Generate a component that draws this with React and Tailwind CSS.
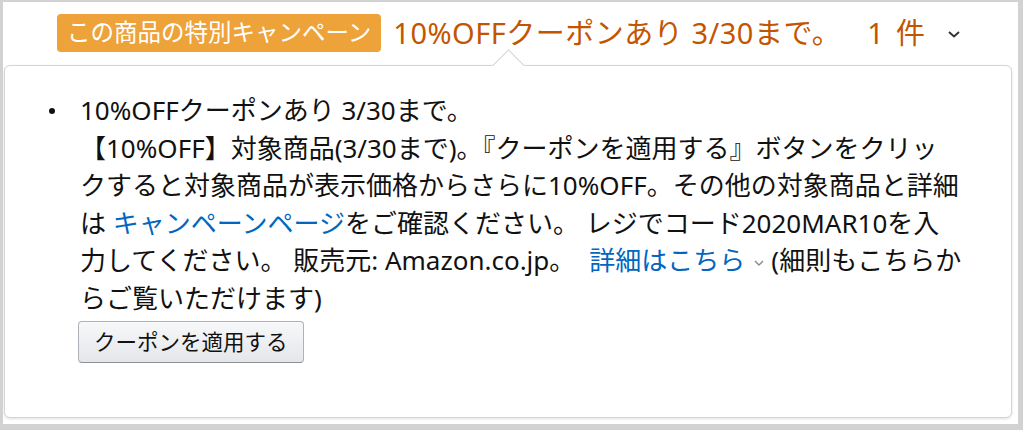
export default function App() {
  return (
    <div
      className="flex h-[430px] w-[1023px] flex-col overflow-hidden border-b-[6px] border-l-[3px] border-r-[5px] border-t-2 border-[#d2d2d2] bg-white"
      style={{ fontFamily: '"Noto Sans", "Noto Sans CJK JP", sans-serif' }}
    >
      <Header />
      <CouponPopover />
    </div>
  );
}

function Header() {
  return (
    <div className="flex h-[63px] shrink-0 items-center pb-[2px] pl-[54px]">
      <span className="flex h-[38px] items-center rounded-[4px] bg-[#eea23a] px-[10px] text-[23.5px] leading-none text-white">
        この商品の特別キャンペーン
      </span>
      <span className="ml-[12px] text-[29px] leading-none tracking-[0.5px] text-[#c45500]">
        10%OFFクーポンあり 3/30まで。
      </span>
      <span className="ml-[26px] flex items-center gap-[12px] text-[29px] leading-none text-[#c45500]">
        <span>1</span>
        <span>件</span>
      </span>
      <svg
        className="ml-[22px] mt-[2px]"
        width="14"
        height="10"
        viewBox="0 0 14 10"
        fill="none"
        stroke="#333"
        strokeWidth="2"
      >
        <path d="M2 3l5 4.5L12 3" />
      </svg>
    </div>
  );
}

function CouponPopover() {
  return (
    <div className="relative mb-[6px] ml-[1px] mr-[6px] flex-1 rounded-[6px] border border-[#d5d5d5] bg-white shadow-[0_1px_3px_rgba(0,0,0,0.13)]">
      {/* arrow */}
      <div className="absolute left-[492px] top-[-12px] h-[23px] w-[23px] rotate-45 border-l border-t border-[#d5d5d5] bg-white" />

      <div className="flex pl-[44px] pr-[30px] pt-[26px] text-[26px] leading-[37.5px] text-[#111]">
        <span className="flex h-[37.5px] w-[31px] shrink-0 items-center">
          <span className="h-[6px] w-[6px] rounded-full bg-[#111]" />
        </span>
        <div className="w-[900px]">
          <p className="whitespace-nowrap">
            10%OFFクーポンあり 3/30まで。
            <br />
            【10%OFF】対象商品(3/30まで)。『クーポンを適用する』ボタンをクリッ
            <br />
            クすると対象商品が表示価格からさらに10%OFF。その他の対象商品と詳細
            <br />
            は <span className="text-[#0066c0]">キャンペーンページ</span>をご確認ください。 レジでコード2020MAR10を入
            <br />
            力してください。 販売元: Amazon.co.jp。
            <span className="ml-[14px] text-[#0066c0]">詳細はこちら</span>
            <svg
              className="ml-[8px] mr-[6px] inline-block align-middle"
              width="12"
              height="8"
              viewBox="0 0 12 8"
              fill="none"
              stroke="#8a8a8a"
              strokeWidth="1.4"
            >
              <path d="M2 2l4 4 4-4" />
            </svg>
            (細則もこちらか
            <br />
            らご覧いただけます)
          </p>
          <button className="-ml-[2px] mt-[4px] flex h-[42px] items-center rounded-[4px] border border-[#adb1b8] border-b-[#8d9096] bg-gradient-to-b from-[#f7f8fa] to-[#e4e6ea] px-[15px] text-[21.5px] leading-none text-[#111] shadow-[inset_0_1px_0_rgba(255,255,255,0.6)]">
            クーポンを適用する
          </button>
        </div>
      </div>
    </div>
  );
}
